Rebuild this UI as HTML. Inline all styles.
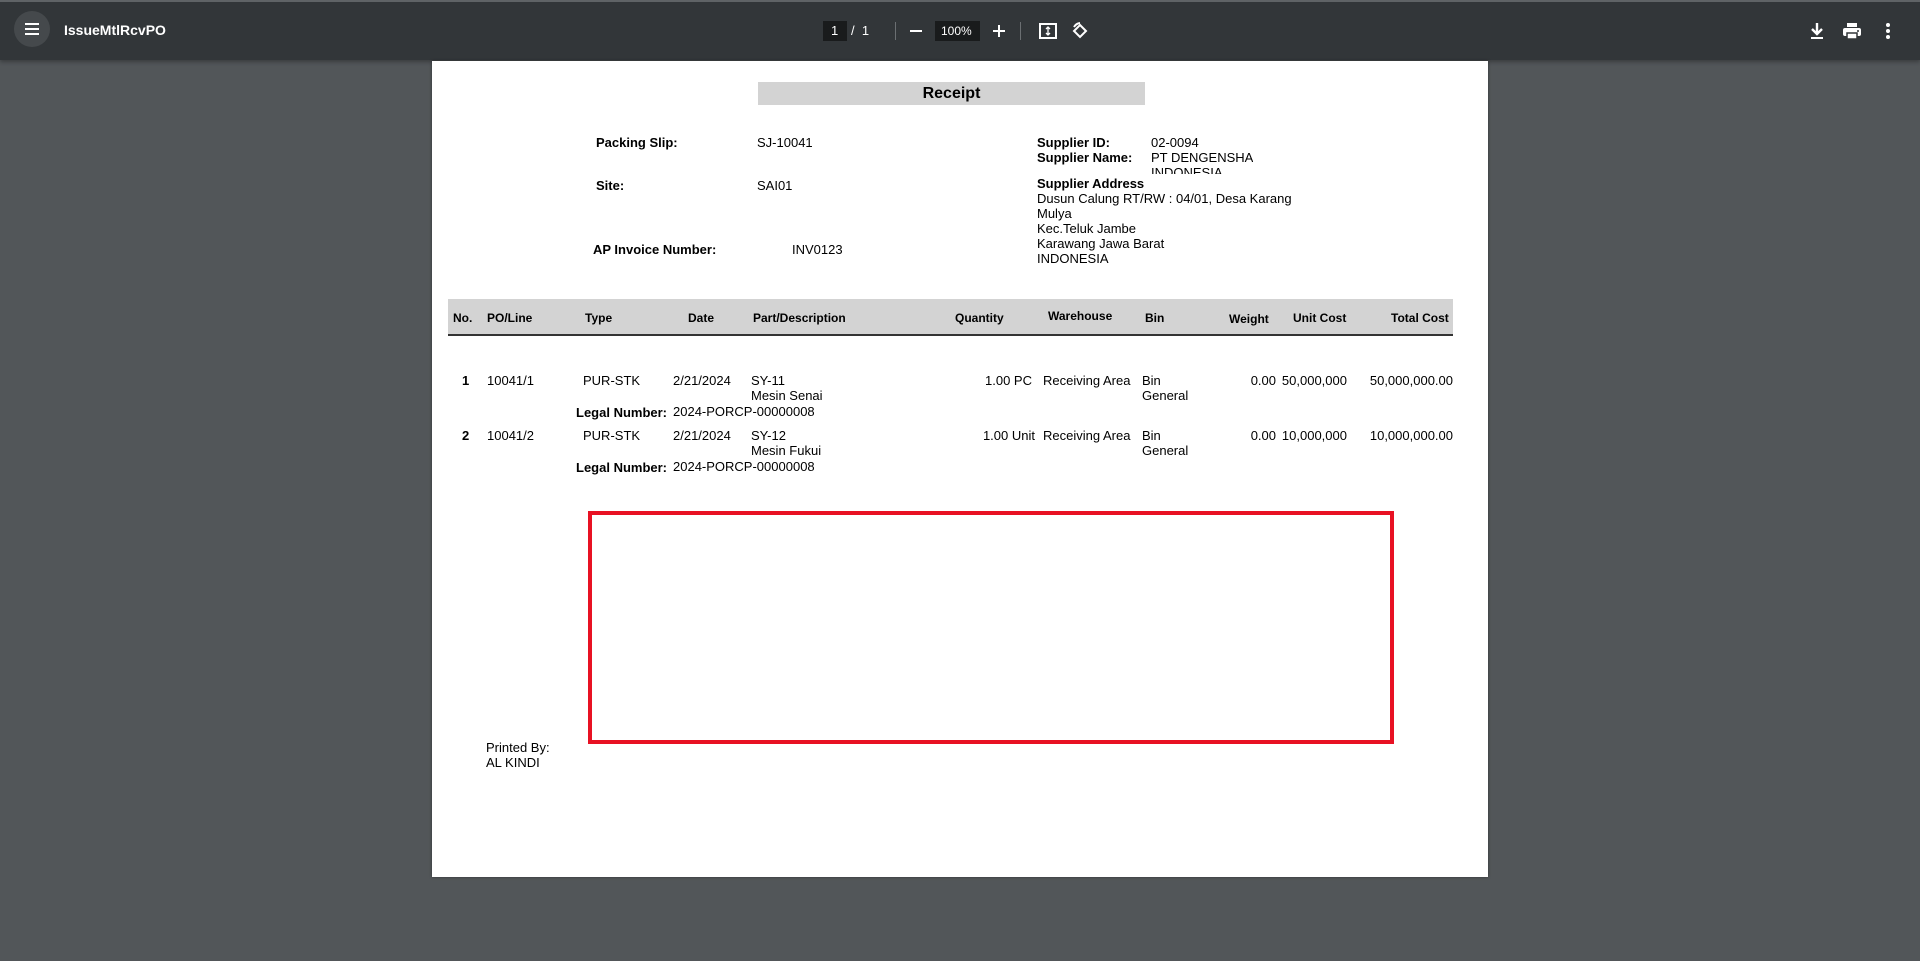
<!DOCTYPE html>
<html><head><meta charset="utf-8"><style>
*{margin:0;padding:0;box-sizing:border-box}
body{width:1920px;height:961px;background:#525659;position:relative;overflow:hidden;font-family:"Liberation Sans",Arial,sans-serif}
.tb{position:absolute;left:0;top:0;width:1920px;height:60px;background:#323639;border-top:2px solid #5f6366;box-shadow:0 2px 4px rgba(0,0,0,.3)}
.a{position:absolute;white-space:nowrap}
.w{color:#fff}
.page{position:absolute;left:432px;top:61px;width:1056px;height:816px;background:#fff;box-shadow:0 0 3px rgba(0,0,0,.4)}
.p{position:absolute;white-space:nowrap;font-size:13px;color:#000;line-height:15px}
.b{font-weight:bold}
.r{text-align:right}
</style></head><body>
<div class="tb">
  <div class="a" style="left:14px;top:9px;width:36px;height:36px;border-radius:50%;background:#45494c"></div>
  <svg class="a" style="left:23px;top:18px" width="18" height="18" viewBox="0 0 18 18"><path d="M2 4h14M2 9h14M2 14h14" stroke="#fff" stroke-width="2"/></svg>
  <div class="a w" style="left:64px;top:20px;font-size:14px;font-weight:bold">IssueMtlRcvPO</div>
  <div class="a" style="left:823px;top:19px;width:24px;height:20px;background:#191b1c"></div>
  <div class="a w" style="left:831px;top:21px;font-size:13px">1</div>
  <div class="a w" style="left:851px;top:21px;font-size:13px">/&nbsp;&nbsp;1</div>
  <div class="a" style="left:895px;top:20px;width:1px;height:18px;background:#6b6f72"></div>
  <div class="a" style="left:910px;top:28px;width:12px;height:2px;background:#fff"></div>
  <div class="a" style="left:935px;top:19px;width:45px;height:20px;background:#191b1c"></div>
  <div class="a w" style="left:941px;top:22px;font-size:12px">100%</div>
  <svg class="a" style="left:993px;top:23px" width="12" height="12"><path d="M6 0v12M0 6h12" stroke="#fff" stroke-width="2"/></svg>
  <div class="a" style="left:1020px;top:20px;width:1px;height:18px;background:#6b6f72"></div>
  <svg class="a" style="left:1039px;top:20px" width="18" height="18" viewBox="0 0 18 18"><rect x="1" y="2" width="16" height="14" fill="none" stroke="#fff" stroke-width="2"/><path d="M9 5v8M7 7l2-2 2 2M7 11l2 2 2-2" stroke="#fff" stroke-width="1.3" fill="none"/></svg>
  <svg class="a" style="left:1071px;top:20px" width="18" height="18" viewBox="0 0 18 18"><path d="M9 3l6 6-6 6-6-6z" fill="none" stroke="#fff" stroke-width="2"/><path d="M3 5a8 8 0 0 1 6-4" fill="none" stroke="#fff" stroke-width="2"/></svg>
  <svg class="a" style="left:1808px;top:20px" width="18" height="18" viewBox="0 0 18 18"><path d="M9 1v10M4 7l5 5 5-5" fill="none" stroke="#fff" stroke-width="2.4"/><path d="M3 16h12" stroke="#fff" stroke-width="2"/></svg>
  <svg class="a" style="left:1842px;top:20px" width="20" height="18" viewBox="0 0 20 18"><rect x="5" y="1" width="10" height="4" fill="#fff"/><rect x="1" y="6" width="18" height="8" rx="2" fill="#fff"/><rect x="5" y="11" width="10" height="6" fill="#fff" stroke="#323639" stroke-width="1.5"/><circle cx="16" cy="9" r="1" fill="#323639"/></svg>
  <svg class="a" style="left:1885px;top:20px" width="6" height="18" viewBox="0 0 6 18"><circle cx="3" cy="3" r="2" fill="#fff"/><circle cx="3" cy="9" r="2" fill="#fff"/><circle cx="3" cy="15" r="2" fill="#fff"/></svg>
</div>
<div class="page">
  <div class="p b" style="left:326px;top:21px;width:387px;height:23px;background:#d3d3d3;text-align:center;font-size:16px;line-height:23px">Receipt</div>
  <div class="p b" style="left:164px;top:74px">Packing Slip:</div>
  <div class="p" style="left:325px;top:74px">SJ-10041</div>
  <div class="p b" style="left:164px;top:117px">Site:</div>
  <div class="p" style="left:325px;top:117px">SAI01</div>
  <div class="p b" style="left:161px;top:181px">AP Invoice Number:</div>
  <div class="p" style="left:360px;top:181px">INV0123</div>
  <div class="p b" style="left:605px;top:74px">Supplier ID:</div>
  <div class="p" style="left:719px;top:74px">02-0094</div>
  <div class="p b" style="left:605px;top:89px">Supplier Name:</div>
  <div class="p" style="left:719px;top:89px;height:24px;overflow:hidden">PT DENGENSHA<br>INDONESIA</div>
  <div class="p" style="left:605px;top:115px"><b>Supplier Address</b><br>Dusun Calung RT/RW : 04/01, Desa Karang<br>Mulya<br>Kec.Teluk Jambe<br>Karawang Jawa Barat<br>INDONESIA</div>
  <div class="p" style="left:16px;top:238px;width:1005px;height:37px;background:#d3d3d3;border-bottom:2px solid #333"></div>
  <div class="p b" style="top:250px;left:21px;font-size:12px">No.</div>
  <div class="p b" style="top:250px;left:55px;font-size:12px">PO/Line</div>
  <div class="p b" style="top:250px;left:153px;font-size:12px">Type</div>
  <div class="p b" style="top:250px;left:256px;font-size:12px">Date</div>
  <div class="p b" style="top:250px;left:321px;font-size:12px">Part/Description</div>
  <div class="p b" style="top:250px;left:523px;font-size:12px">Quantity</div>
  <div class="p b" style="top:248px;left:616px;font-size:12px">Warehouse</div>
  <div class="p b" style="top:250px;left:713px;font-size:12px">Bin</div>
  <div class="p b" style="top:251px;left:797px;font-size:12px">Weight</div>
  <div class="p b" style="top:250px;left:861px;font-size:12px">Unit Cost</div>
  <div class="p b" style="top:250px;left:959px;font-size:12px">Total Cost</div>

  <div class="p b" style="top:312px;left:30px">1</div>
  <div class="p" style="top:312px;left:55px">10041/1</div>
  <div class="p" style="top:312px;left:151px">PUR-STK</div>
  <div class="p" style="top:312px;left:241px">2/21/2024</div>
  <div class="p" style="top:312px;left:319px">SY-11<br>Mesin Senai</div>
  <div class="p r" style="top:312px;left:500px;width:100px">1.00 PC</div>
  <div class="p" style="top:312px;left:611px">Receiving Area</div>
  <div class="p" style="top:312px;left:710px">Bin<br>General</div>
  <div class="p r" style="top:312px;left:744px;width:100px">0.00</div>
  <div class="p r" style="top:312px;left:815px;width:100px">50,000,000</div>
  <div class="p r" style="top:312px;left:871px;width:150px">50,000,000.00</div>
  <div class="p b" style="top:344px;left:144px">Legal Number:</div>
  <div class="p" style="top:343px;left:241px">2024-PORCP-00000008</div>

  <div class="p b" style="top:367px;left:30px">2</div>
  <div class="p" style="top:367px;left:55px">10041/2</div>
  <div class="p" style="top:367px;left:151px">PUR-STK</div>
  <div class="p" style="top:367px;left:241px">2/21/2024</div>
  <div class="p" style="top:367px;left:319px">SY-12<br>Mesin Fukui</div>
  <div class="p r" style="top:367px;left:500px;width:103px">1.00 Unit</div>
  <div class="p" style="top:367px;left:611px">Receiving Area</div>
  <div class="p" style="top:367px;left:710px">Bin<br>General</div>
  <div class="p r" style="top:367px;left:744px;width:100px">0.00</div>
  <div class="p r" style="top:367px;left:815px;width:100px">10,000,000</div>
  <div class="p r" style="top:367px;left:871px;width:150px">10,000,000.00</div>
  <div class="p b" style="top:399px;left:144px">Legal Number:</div>
  <div class="p" style="top:398px;left:241px">2024-PORCP-00000008</div>

  <div class="p" style="left:156px;top:450px;width:806px;height:233px;border:4px solid #e81123"></div>
  <div class="p" style="left:54px;top:679px">Printed By:<br>AL KINDI</div>
</div>
</body></html>
